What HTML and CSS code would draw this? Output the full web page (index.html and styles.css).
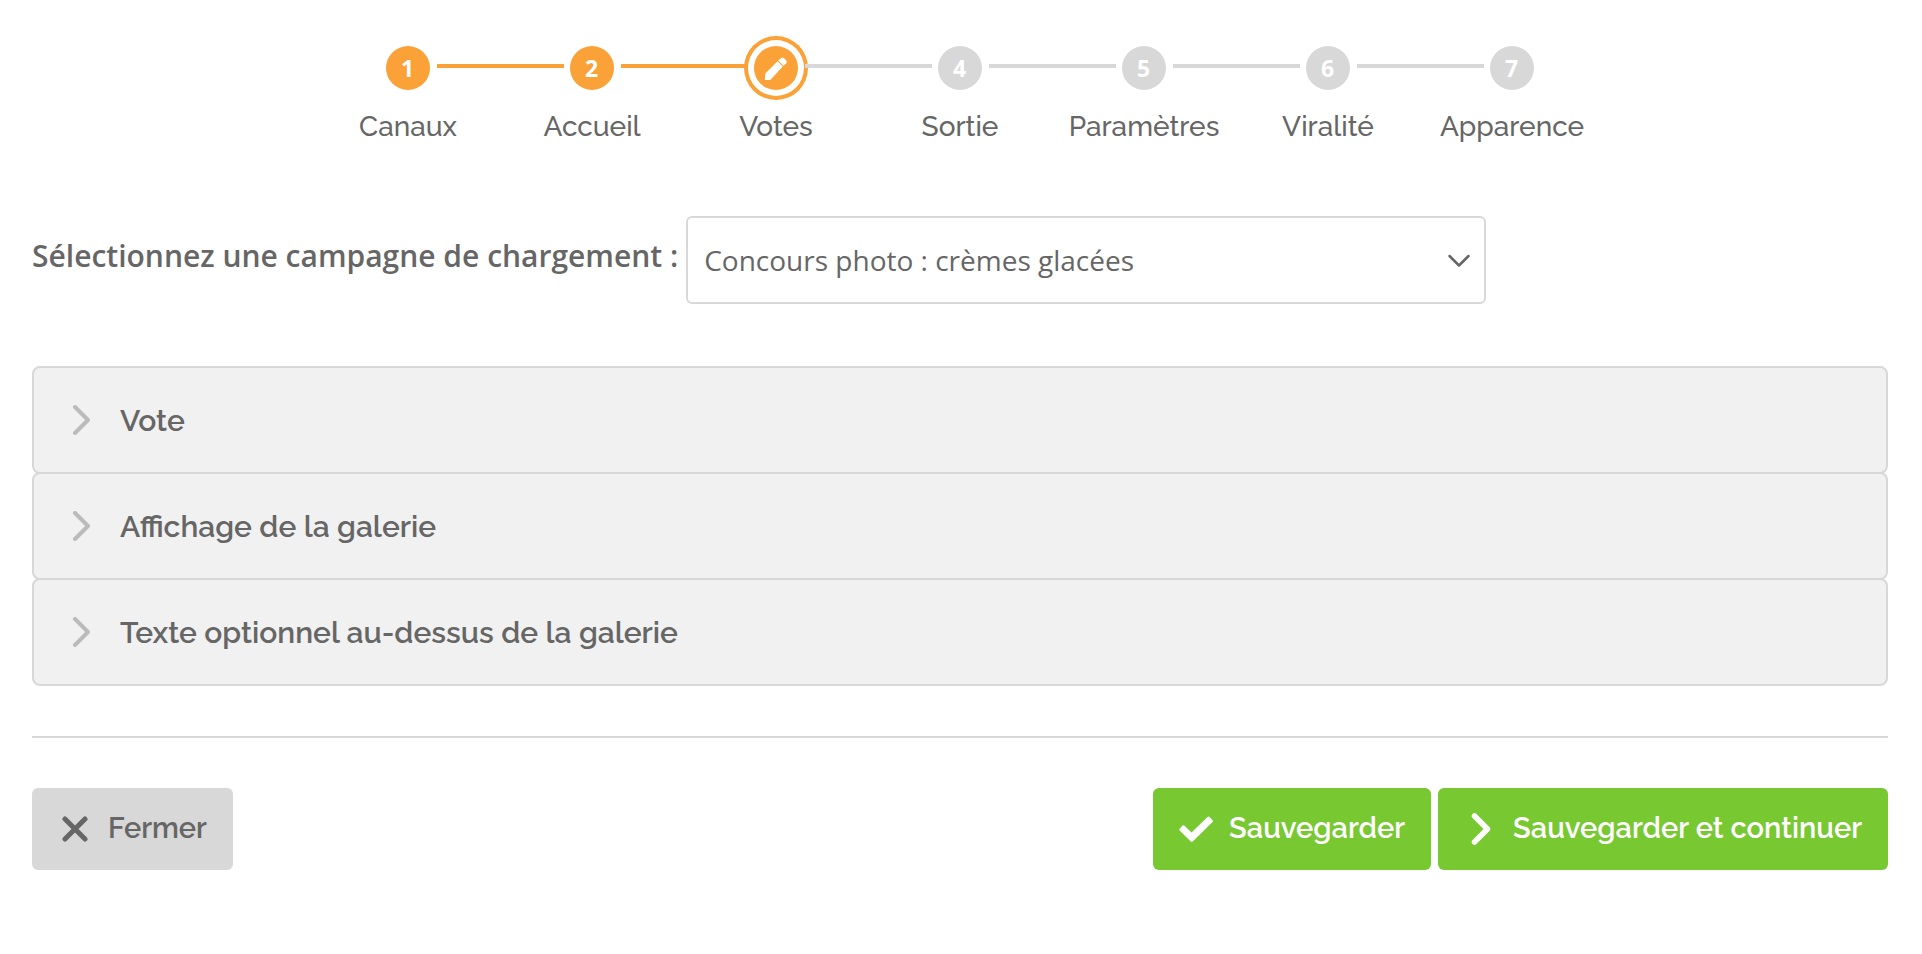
FILE: index.html
```html
<!DOCTYPE html>
<html lang="fr">
<head>
  <meta charset="UTF-8" />
  <meta name="viewport" content="width=device-width, initial-scale=1" />
  <title>Votes</title>
  <link rel="stylesheet" href="styles.css">
</head>
<body>
  <main>
    <ol class="steps">
      <li class="step done">
        <div class="marker"><span class="circle">1</span></div>
        <span class="step-name">Canaux</span>
      </li>
      <li class="step done">
        <div class="marker"><span class="circle">2</span></div>
        <span class="step-name">Accueil</span>
      </li>
      <li class="step current" aria-current="step">
        <div class="marker">
          <span class="circle">
            <svg width="24" height="24" viewBox="0 0 24 24" fill="#fff" aria-hidden="true">
              <path d="M1.500 24.500 Q.8 24.500 .8 23.500 L1.300 17.500 L13.600 5.200 L18.800 10.400 L7 23.300 Q6 24.500 5 24.500 Z" />
              <path d="M14.200 4.600 L17.200 1.900 Q18.500 1 19.800 2 L22.300 4.500 Q23.400 5.800 22.300 7.200 L19.500 9.800 Z" />
            </svg>
          </span>
        </div>
        <span class="step-name">Votes</span>
      </li>
      <li class="step">
        <div class="marker"><span class="circle">4</span></div>
        <span class="step-name">Sortie</span>
      </li>
      <li class="step">
        <div class="marker"><span class="circle">5</span></div>
        <span class="step-name">Paramètres</span>
      </li>
      <li class="step">
        <div class="marker"><span class="circle">6</span></div>
        <span class="step-name">Viralité</span>
      </li>
      <li class="step">
        <div class="marker"><span class="circle">7</span></div>
        <span class="step-name">Apparence</span>
      </li>
    </ol>

    <div class="campaign">
      <label for="campaign">Sélectionnez une campagne de chargement :</label>
      <div class="select-box">
        <select id="campaign">
          <option>Concours photo : crèmes glacées</option>
        </select>
        <svg class="arrow" width="24" height="14" viewBox="0 0 24 14" fill="none" stroke="#666" stroke-width="2.500" stroke-linecap="round" stroke-linejoin="round" aria-hidden="true">
          <path d="M2.500 2 L12 11.500 L21.500 2" />
        </svg>
      </div>
    </div>

    <div class="panels">
      <button type="button" class="panel" aria-expanded="false">
        <svg width="18" height="30" viewBox="0 0 18 30" aria-hidden="true"><path d="M3 2 L16 15 L3 28" /></svg>
        Vote
      </button>
      <button type="button" class="panel" aria-expanded="false">
        <svg width="18" height="30" viewBox="0 0 18 30" aria-hidden="true"><path d="M3 2 L16 15 L3 28" /></svg>
        Affichage de la galerie
      </button>
      <button type="button" class="panel" aria-expanded="false">
        <svg width="18" height="30" viewBox="0 0 18 30" aria-hidden="true"><path d="M3 2 L16 15 L3 28" /></svg>
        Texte optionnel au-dessus de la galerie
      </button>
    </div>

    <div class="actions">
      <button type="button" class="btn btn-close">
        <svg width="26" height="26" viewBox="0 0 26 26" fill="none" stroke="#666" stroke-width="5" stroke-linecap="round" aria-hidden="true">
          <path d="M3 3 L23 23 M23 3 L3 23" />
        </svg>
        <span>Fermer</span>
      </button>
      <div class="save-group">
        <button type="button" class="btn btn-save">
          <svg width="34" height="26" viewBox="0 0 34 26" fill="#fff" aria-hidden="true">
            <path d="M.5 13 L3.500 9.600 Q4.500 8.800 5.500 9.700 L12.500 16.500 L28.500 .9 Q29.500 0 30.500 .9 L33.500 4.200 Q34.300 5.200 33.500 6.100 L14 25.200 Q12.800 26.500 11.500 25.200 L.6 14.500 Q0 13.700 .5 13 Z" />
          </svg>
          <span>Sauvegarder</span>
        </button>
        <button type="button" class="btn btn-next">
          <svg width="20" height="32" viewBox="0 0 20 32" fill="none" stroke="#fff" stroke-width="5.500" stroke-linecap="round" stroke-linejoin="round" aria-hidden="true">
            <path d="M3.500 3 L16.500 16 L3.500 29" />
          </svg>
          <span>Sauvegarder et continuer</span>
        </button>
      </div>
    </div>
  </main>
</body>
</html>
```
FILE: styles.css
```css
* {
  box-sizing: border-box;
}
body {
  margin: 0;
  background: #fff;
  color: #666;
  font-family: 'Open Sans', sans-serif;
  font-size: 28px;
}
main {
  padding: 36px 34px 36px 32px;
}
button {
  font-family: Raleway, Lato, sans-serif;
  color: #666;
  cursor: pointer;
}

/* Steps */
.steps {
  display: flex;
  justify-content: center;
  list-style: none;
  margin: 0;
  padding: 0;
}
.step {
  width: 184px;
  text-align: center;
}
.marker {
  display: flex;
  align-items: center;
  height: 64px;
}
.marker::before,
.marker::after {
  content: '';
  flex: 1;
  height: 4px;
  margin: 0 6px 4px 0;
  background: #d8d8d8;
}
.marker::after {
  margin: 0 0 4px 7px;
}
.done .marker::before,
.done .marker::after,
.current .marker::before {
  background: #faa138;
}
.step:first-child .marker::before,
.step:last-child .marker::after {
  visibility: hidden;
}
.circle {
  display: flex;
  align-items: center;
  justify-content: center;
  width: 44px;
  height: 44px;
  border-radius: 50%;
  background: #d8d8d8;
  color: #fff;
  font-size: 23px;
  font-weight: 700;
}
.done .circle,
.current .circle {
  background: #faa138;
}
.current .circle {
  box-shadow: 0 0 0 6px #fff, 0 0 0 10px #faa138;
}
.step-name {
  display: block;
  margin-top: 9px;
  font-family: Raleway, Lato, sans-serif;
  font-weight: 500;
  line-height: 36px;
}

/* Campaign select */
.campaign {
  display: flex;
  align-items: center;
  gap: 8px;
  margin-top: 71px;
}
.campaign label {
  padding-bottom: 10px;
  font-size: 30px;
  font-weight: 600;
}
.select-box {
  position: relative;
  flex: 0 1 800px;
}
.select-box select {
  appearance: none;
  width: 100%;
  height: 88px;
  padding: 0 60px 0 16px;
  border: 2px solid #d8d8d8;
  border-radius: 6px;
  background: #fff;
  color: #666;
  font-family: 'Open Sans', sans-serif;
  font-size: 28px;
}
.arrow {
  position: absolute;
  top: 38px;
  right: 15px;
  pointer-events: none;
}

/* Panels */
.panels {
  display: flex;
  flex-direction: column;
  margin-top: 62px;
  padding-bottom: 50px;
  border-bottom: 2px solid #d8d8d8;
}
.panel {
  display: flex;
  align-items: center;
  gap: 30px;
  height: 108px;
  padding: 0 38px;
  border: 2px solid #d8d8d8;
  border-radius: 8px;
  background: #f1f1f1;
  font-size: 30px;
  font-weight: 600;
  text-align: left;
}
.panel + .panel {
  margin-top: -2px;
}
.panel svg {
  fill: none;
  stroke: #bbb;
  stroke-width: 4;
  stroke-linecap: round;
  stroke-linejoin: round;
}

/* Buttons */
.actions {
  display: flex;
  justify-content: space-between;
  margin-top: 50px;
}
.save-group {
  display: flex;
  gap: 7px;
}
.btn {
  display: flex;
  align-items: center;
  height: 82px;
  padding: 0 26px;
  border: none;
  border-radius: 6px;
  font-size: 29px;
  font-weight: 600;
}
.btn span {
  padding-bottom: 2px;
}
.btn-close {
  gap: 20px;
  padding-left: 30px;
  background: #d8d8d8;
}
.btn-save,
.btn-next {
  gap: 16px;
  background: #78c832;
  color: #fff;
}
.btn-next {
  gap: 22px;
  padding-left: 33px;
}

@media (max-width: 1300px) {
  .campaign,
  .actions,
  .save-group {
    flex-wrap: wrap;
  }
}
```
